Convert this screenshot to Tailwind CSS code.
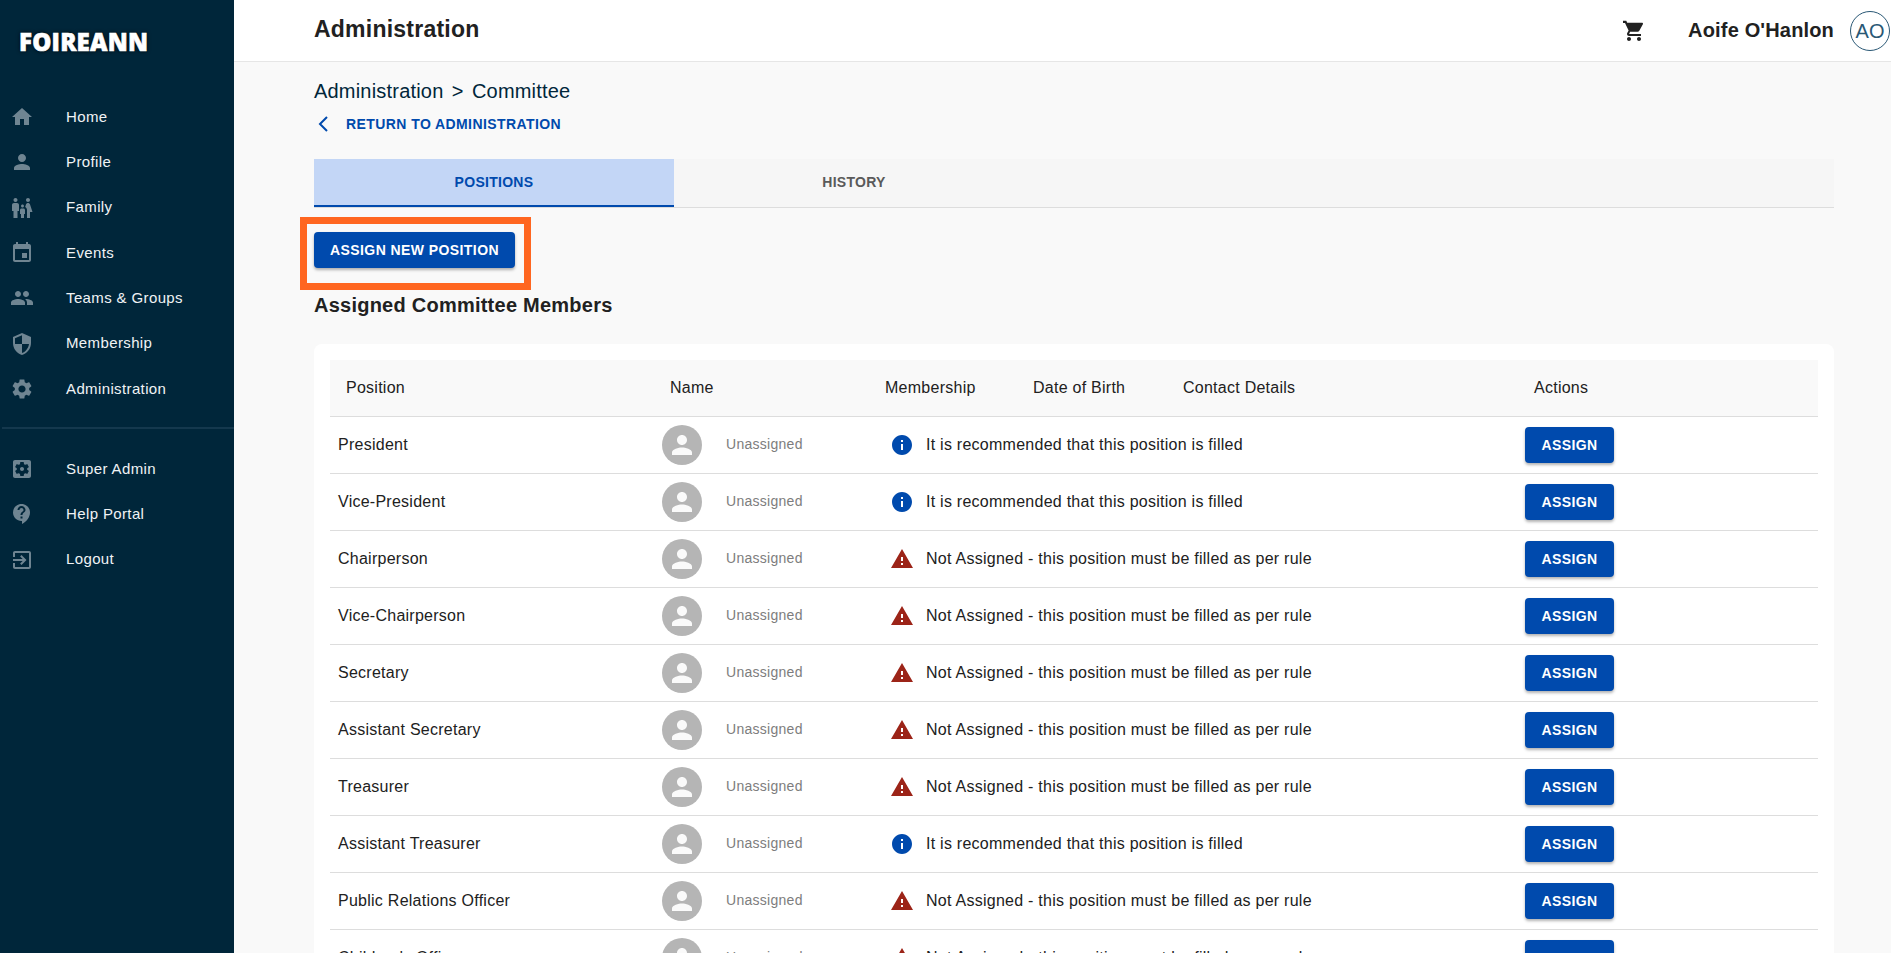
<!DOCTYPE html>
<html lang="en">
<head>
    <meta charset="UTF-8">
    <meta name="viewport" content="width=device-width, initial-scale=1.0">
    <title>Committee</title>
    <script src="https://cdn.jsdelivr.net/npm/@tailwindcss/browser@4"></script>
</head>
<body class="h-screen overflow-hidden bg-[#f9f9f9] font-['Liberation_Sans',Arial,sans-serif] text-[#212121]">
    <svg class="hidden">
        <symbol id="i-home" viewBox="0 0 24 24"><path d="M10 20v-6h4v6h5v-8h3L12 3 2 12h3v8z"/></symbol>
        <symbol id="i-person" viewBox="0 0 24 24"><path d="M12 12c2.21 0 4-1.79 4-4s-1.79-4-4-4-4 1.79-4 4 1.79 4 4 4zm0 2c-2.67 0-8 1.34-8 4v2h16v-2c0-2.66-5.33-4-8-4z"/></symbol>
        <symbol id="i-family" viewBox="0 0 24 24"><path d="M16 4c0-1.11.89-2 2-2s2 .89 2 2-.89 2-2 2-2-.89-2-2zm4 18v-6h2.5l-2.54-7.63C19.68 7.55 18.92 7 18.06 7h-.12c-.86 0-1.63.55-1.9 1.37l-.86 2.58c1.08.6 1.82 1.73 1.82 3.05v8h4zm-7.5-10.5c.83 0 1.5-.67 1.5-1.5s-.67-1.5-1.5-1.5S11 9.17 11 10s.67 1.5 1.5 1.5zM5.5 6c1.11 0 2-.89 2-2s-.89-2-2-2-2 .89-2 2 .89 2 2 2zm2 16v-7H9V9c0-1.1-.9-2-2-2H4c-1.1 0-2 .9-2 2v6h1.5v7h4zm6.5 0v-4h1v-4c0-.82-.68-1.5-1.5-1.5h-2c-.82 0-1.5.68-1.5 1.5v4h1v4h3z"/></symbol>
        <symbol id="i-event" viewBox="0 0 24 24"><path d="M17 12h-5v5h5v-5zM16 1v2H8V1H6v2H5c-1.11 0-1.99.9-1.99 2L3 19c0 1.1.89 2 2 2h14c1.1 0 2-.9 2-2V5c0-1.1-.9-2-2-2h-1V1h-2zm3 18H5V8h14v11z"/></symbol>
        <symbol id="i-people" viewBox="0 0 24 24"><path d="M16 11c1.66 0 2.99-1.34 2.99-3S17.66 5 16 5c-1.66 0-3 1.34-3 3s1.34 3 3 3zm-8 0c1.66 0 2.99-1.34 2.99-3S9.66 5 8 5C6.34 5 5 6.34 5 8s1.34 3 3 3zm0 2c-2.33 0-7 1.17-7 3.5V19h14v-2.5c0-2.33-4.67-3.5-7-3.5zm8 0c-.29 0-.62.02-.97.05 1.16.84 1.97 1.97 1.97 3.45V19h6v-2.5c0-2.33-4.67-3.5-7-3.5z"/></symbol>
        <symbol id="i-shield" viewBox="0 0 24 24"><path d="M12 1L3 5v6c0 5.55 3.84 10.74 9 12 5.16-1.26 9-6.45 9-12V5l-9-4zm0 10.99h7c-.53 4.12-3.28 7.79-7 8.94V12H5V6.3l7-3.11v8.8z"/></symbol>
        <symbol id="i-gear" viewBox="0 0 24 24"><path d="M19.14 12.94c.04-.3.06-.61.06-.94 0-.32-.02-.64-.07-.94l2.03-1.58c.18-.14.23-.41.12-.61l-1.92-3.32c-.12-.22-.37-.29-.59-.22l-2.39.96c-.5-.38-1.03-.7-1.62-.94l-.36-2.54c-.04-.24-.24-.41-.48-.41h-3.84c-.24 0-.43.17-.47.41l-.36 2.54c-.59.24-1.13.57-1.62.94l-2.39-.96c-.22-.08-.47 0-.59.22L2.74 8.87c-.12.21-.08.47.12.61l2.03 1.58c-.05.3-.09.63-.09.94s.02.64.07.94l-2.03 1.58c-.18.14-.23.41-.12.61l1.92 3.32c.12.22.37.29.59.22l2.39-.96c.5.38 1.03.7 1.62.94l.36 2.54c.05.24.24.41.48.41h3.84c.24 0 .44-.17.47-.41l.36-2.54c.59-.24 1.13-.56 1.62-.94l2.39.96c.22.08.47 0 .59-.22l1.92-3.32c.12-.22.07-.47-.12-.61l-2.01-1.58zM12 15.6c-1.98 0-3.6-1.62-3.6-3.6s1.62-3.6 3.6-3.6 3.6 1.62 3.6 3.6-1.62 3.6-3.6 3.6z"/></symbol>
        <symbol id="i-super" viewBox="0 0 24 24"><path d="M12 10c-1.1 0-2 .9-2 2s.9 2 2 2 2-.9 2-2-.9-2-2-2zm7-7H5c-1.11 0-2 .9-2 2v14c0 1.1.89 2 2 2h14c1.11 0 2-.9 2-2V5c0-1.1-.89-2-2-2zm-1.75 9c0 .23-.02.46-.05.68l1.48 1.16c.13.11.17.3.08.45l-1.4 2.42c-.09.15-.27.21-.43.15l-1.74-.7c-.36.28-.76.51-1.18.69l-.26 1.85c-.03.17-.18.3-.35.3h-2.8c-.17 0-.32-.13-.35-.3l-.26-1.85c-.43-.18-.82-.41-1.18-.69l-1.74.7c-.16.06-.34 0-.43-.15l-1.4-2.42c-.09-.15-.05-.34.08-.45l1.48-1.16c-.03-.22-.05-.45-.05-.68 0-.23.02-.46.05-.68l-1.48-1.16c-.13-.11-.17-.3-.08-.45l1.4-2.42c.09-.15.27-.21.43-.15l1.74.7c.36-.28.76-.51 1.18-.69l.26-1.85c.03-.17.18-.3.35-.3h2.8c.17 0 .32.13.35.3l.26 1.85c.43.18.82.41 1.18.69l1.74-.7c.16-.06.34 0 .43.15l1.4 2.42c.09.15.05.34-.08.45l-1.48 1.16c.03.22.05.45.05.68z"/></symbol>
        <symbol id="i-help" viewBox="0 0 24 24"><path d="M11.5 2C6.81 2 3 5.81 3 10.5S6.81 19 11.5 19h.5v3c4.86-2.34 8-7 8-11.5C20 5.81 16.19 2 11.5 2zm1 14.5h-2v-2h2v2zm0-3.5h-2c0-3.25 3-3 3-5 0-1.1-.9-2-2-2s-2 .9-2 2h-2c0-2.21 1.79-4 4-4s4 1.79 4 4c0 2.5-3 2.75-3 5z"/></symbol>
        <symbol id="i-exit" viewBox="0 0 24 24"><path d="M10.09 15.59L11.5 17l5-5-5-5-1.41 1.41L12.67 11H3v2h9.67l-2.58 2.59zM19 3H5c-1.11 0-2 .9-2 2v4h2V5h14v14H5v-4H3v4c0 1.1.89 2 2 2h14c1.1 0 2-.9 2-2V5c0-1.1-.9-2-2-2z"/></symbol>
        <symbol id="i-cart" viewBox="0 0 24 24"><path d="M7 18c-1.1 0-1.99.9-1.99 2S5.9 22 7 22s2-.9 2-2-.9-2-2-2zM1 2v2h2l3.6 7.59-1.35 2.45c-.16.28-.25.61-.25.96 0 1.1.9 2 2 2h12v-2H7.42c-.14 0-.25-.11-.25-.25l.03-.12.9-1.83h7.45c.75 0 1.41-.41 1.75-1.03l3.58-6.49c.08-.14.12-.31.12-.48 0-.55-.45-1-1-1H5.21l-.94-2H1zm16 16c-1.1 0-1.99.9-1.99 2s.89 2 1.99 2 2-.9 2-2-.9-2-2-2z"/></symbol>
        <symbol id="i-info" viewBox="0 0 24 24"><path d="M12 2C6.48 2 2 6.48 2 12s4.48 10 10 10 10-4.48 10-10S17.52 2 12 2zm1 15h-2v-6h2v6zm0-8h-2V7h2v2z"/></symbol>
        <symbol id="i-warn" viewBox="0 0 24 24"><path d="M1 21h22L12 2 1 21zm12-3h-2v-2h2v2zm0-4h-2v-4h2v4z"/></symbol>
    </svg>

    <div class="flex h-full">
        <!-- sidebar -->
        <aside class="w-[234px] shrink-0 bg-[#00263a] text-[#f0f3f5]">
            <div class="h-[94.5px] pl-[19px] pt-[27px] font-['Open_Sans',sans-serif] text-[24px] leading-[30px] font-extrabold tracking-[0.01em] text-white [-webkit-text-stroke:0.6px_white] [text-shadow:0_0_4px_#000]">FOIREANN</div>
            <nav class="text-[15px] tracking-[0.025em]">
                <a class="flex h-[45.3px] items-center"><svg class="ml-[10px] size-6 fill-[#6f8592]"><use href="#i-home"/></svg><span class="ml-8">Home</span></a>
                <a class="flex h-[45.3px] items-center"><svg class="ml-[10px] size-6 fill-[#6f8592]"><use href="#i-person"/></svg><span class="ml-8">Profile</span></a>
                <a class="flex h-[45.3px] items-center"><svg class="ml-[10px] size-6 fill-[#6f8592]"><use href="#i-family"/></svg><span class="ml-8">Family</span></a>
                <a class="flex h-[45.3px] items-center"><svg class="ml-[10px] size-6 fill-[#6f8592]"><use href="#i-event"/></svg><span class="ml-8">Events</span></a>
                <a class="flex h-[45.3px] items-center"><svg class="ml-[10px] size-6 fill-[#6f8592]"><use href="#i-people"/></svg><span class="ml-8">Teams &amp; Groups</span></a>
                <a class="flex h-[45.3px] items-center"><svg class="ml-[10px] size-6 fill-[#6f8592]"><use href="#i-shield"/></svg><span class="ml-8">Membership</span></a>
                <a class="flex h-[45.3px] items-center"><svg class="ml-[10px] size-6 fill-[#6f8592]"><use href="#i-gear"/></svg><span class="ml-8">Administration</span></a>
            </nav>
            <div class="mt-[15.5px] ml-[2px] h-[2px] bg-[#14384d]"></div>
            <nav class="mt-[17.3px] text-[15px] tracking-[0.025em]">
                <a class="flex h-[45.3px] items-center"><svg class="ml-[10px] size-6 fill-[#6f8592]"><use href="#i-super"/></svg><span class="ml-8">Super Admin</span></a>
                <a class="flex h-[45.3px] items-center"><svg class="ml-[10px] size-6 fill-[#6f8592]"><use href="#i-help"/></svg><span class="ml-8">Help Portal</span></a>
                <a class="flex h-[45.3px] items-center"><svg class="ml-[10px] size-6 fill-[#6f8592]"><use href="#i-exit"/></svg><span class="ml-8">Logout</span></a>
            </nav>
        </aside>

        <div class="min-w-0 flex-1">
            <!-- top bar -->
            <header class="flex h-[62px] items-center border-b border-[#e6e6e6] bg-white pb-[2px] pl-20">
                <h1 class="text-[23px] font-bold tracking-[0.01em]">Administration</h1>
                <svg class="ml-auto mt-[2px] size-6 fill-[#212121]"><use href="#i-cart"/></svg>
                <span class="ml-[42px] text-[20px] font-bold tracking-[0.008em]">Aoife O'Hanlon</span>
                <span class="mr-px ml-4 mt-[2px] flex size-10 items-center justify-center rounded-full border border-[#2a5875] text-[20px] text-[#2a5875]">AO</span>
            </header>

            <main class="relative pr-[57px] pl-20">
                <p class="pt-4 text-[20px] leading-[26px] tracking-[0.01em] [word-spacing:2.5px] text-[#00263a]">Administration &gt; Committee</p>
                <a class="mt-2 flex h-6 items-center text-[14px] font-bold tracking-[0.03em] text-[#004aad]">
                    <svg class="ml-px size-[16px] fill-none stroke-[#004aad] stroke-2" viewBox="0 0 16 16"><path d="M12 1 L5 8 L12 15"/></svg>
                    <span class="ml-[15px]">RETURN TO ADMINISTRATION</span>
                </a>

                <div class="mt-[23px] flex h-[49px] border-b border-[#dddddd] bg-[#f6f6f6] text-[14px] font-bold tracking-[0.02em]">
                    <div class="flex h-12 w-[360px] items-center justify-center border-b-2 border-[#004aad] bg-[#c3d6f6] text-[#004aad]">POSITIONS</div>
                    <div class="flex h-[47px] w-[360px] items-center justify-center text-[#5a5a5a]">HISTORY</div>
                </div>

                <button class="mt-6 flex h-9 w-[201px] items-center justify-center rounded bg-[#004aad] text-[14px] font-bold tracking-[0.03em] text-white shadow-[0_2px_3px_rgba(0,0,0,0.3)]">ASSIGN NEW POSITION</button>
                <!-- orange highlight round the button -->
                <div class="absolute top-[155px] left-[66px] h-[73px] w-[231px] border-[7px] border-[#ff6620]"></div>

                <h2 class="mt-[25px] text-[20px] leading-6 font-bold tracking-[0.012em]">Assigned Committee Members</h2>

                <section class="mt-[27px] rounded-t-lg bg-white px-4 pt-4">
                    <div class="grid h-[57px] grid-cols-[324px_215px_148px_150px_351px_1fr] items-center border-b border-[#dddddd] bg-[#f9f9f9] text-[16px] tracking-[0.016em]">
                        <span class="pl-4">Position</span>
                        <span class="pl-4">Name</span>
                        <span class="pl-4">Membership</span>
                        <span class="pl-4">Date of Birth</span>
                        <span class="pl-4">Contact Details</span>
                        <span class="pl-4">Actions</span>
                    </div>
                    <div id="rows"></div>
                </section>
            </main>
        </div>
    </div>

    <script>
        const rows = [
            ['President', 'info'],
            ['Vice-President', 'info'],
            ['Chairperson', 'warn'],
            ['Vice-Chairperson', 'warn'],
            ['Secretary', 'warn'],
            ['Assistant Secretary', 'warn'],
            ['Treasurer', 'warn'],
            ['Assistant Treasurer', 'info'],
            ['Public Relations Officer', 'warn'],
            ["Children's Officer", 'warn']
        ];

        let html = '';
        for (const [position, level] of rows) {
            const icon = level == 'info'
                ? '<svg class="size-6 fill-[#004aad]"><use href="#i-info"/></svg>'
                : '<svg class="size-6 fill-[#9c2418]"><use href="#i-warn"/></svg>';
            const text = level == 'info'
                ? 'It is recommended that this position is filled'
                : 'Not Assigned - this position must be filled as per rule';
            html += `<div class="grid h-[57px] grid-cols-[332px_207px_649px_1fr] items-center border-b border-[#dddddd] text-[16px] tracking-[0.016em]">
                <span class="pl-2">${position}</span>
                <div class="flex items-center">
                    <span class="flex size-10 items-center justify-center rounded-full bg-[#b5b5b5]"><svg class="size-[30px] fill-[#fafafa]"><use href="#i-person"/></svg></span>
                    <span class="ml-6 pb-[2px] text-[14px] tracking-[0.02em] text-[#7d7d7d]">Unassigned</span>
                </div>
                <div class="flex items-center pl-[21px]">${icon}<span class="ml-3">${text}</span></div>
                <div class="pl-[7px]"><button class="flex h-9 w-[89px] items-center justify-center rounded bg-[#004aad] text-[14px] font-bold tracking-[0.03em] text-white shadow-[0_2px_3px_rgba(0,0,0,0.3)]">ASSIGN</button></div>
            </div>`;
        }
        document.getElementById('rows').innerHTML = html;
    </script>
</body>
</html>
